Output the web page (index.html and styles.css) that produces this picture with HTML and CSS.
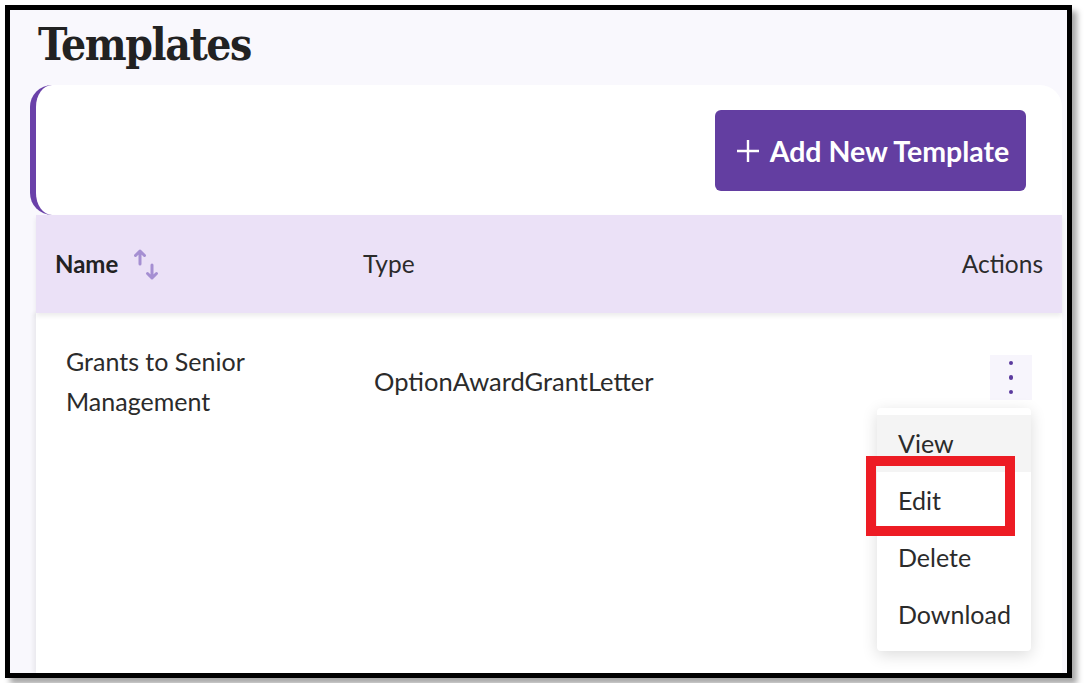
FILE: index.html
```html
<!DOCTYPE html>
<html>
<head>
<meta charset="utf-8">
<link rel="stylesheet" href="styles.css">
</head>
<body>
<div class="frame">
  <div class="page-head">
    <h1 class="title">Templates</h1>
  </div>
  <div class="card">
    <div class="card-top">
      <button class="add-btn">
        <svg class="plus" width="24" height="24" viewBox="0 0 24 24"><path d="M12 1v22M1 12h22" stroke="#fff" stroke-width="2.4" fill="none"/></svg>
        <span>Add New Template</span>
      </button>
    </div>
    <div class="thead">
      <div class="th th-name">Name
        <svg class="sort" width="26" height="32" viewBox="0 0 26 32"><g stroke="#a58fd2" stroke-width="3" fill="none" stroke-linecap="round" stroke-linejoin="round"><path d="M6 15V2M1.5 6.5L6 2l4.5 4.5"/><path d="M18 16v13M13.5 24.5L18 29l4.5-4.5"/></g></svg>
      </div>
      <div class="th">Type</div>
      <div class="th th-actions">Actions</div>
    </div>
    <div class="tbody">
      <div class="row">
        <div class="cell cell-name"><span class="name-text">Grants to Senior Management</span></div>
        <div class="cell cell-type">OptionAwardGrantLetter</div>
        <div class="cell cell-actions">
          <div class="kebab-wrap">
            <div class="kebab"><i></i><i></i><i></i></div>
            <div class="menu">
              <div class="menu-item hover">View</div>
              <div class="menu-item">Edit</div>
              <div class="menu-item">Delete</div>
              <div class="menu-item">Download</div>
              <div class="highlight"></div>
            </div>
          </div>
        </div>
      </div>
    </div>
  </div>
</div>
</body>
</html>
```

FILE: styles.css
```css
* { box-sizing: border-box; }
html, body { margin: 0; padding: 0; background: #fff; }
body { font-family: Lato, "Open Sans", sans-serif; color: #2b2b2b; }

.frame {
  margin: 5px;
  width: 1067px;
  height: 673px;
  border: 5px solid #000;
  background: #f9f8fd;
  box-shadow: 5px 6px 6px rgba(0,0,0,0.35);
  overflow: hidden;
  display: flex;
  flex-direction: column;
}

.page-head {
  height: 75px;
  padding: 7px 0 0 28px;
  flex: none;
}
.title {
  margin: 0;
  font-family: "DejaVu Serif", "Liberation Serif", serif;
  font-stretch: condensed;
  font-weight: 700;
  font-size: 44px;
  line-height: 56px;
  color: #222;
  letter-spacing: -1.4px;
}

.card {
  margin: 0 5px 0 20px;
  flex: 1;
  display: flex;
  flex-direction: column;
}
.card-top {
  height: 130px;
  flex: none;
  background: #fff;
  border-left: 6px solid #6a41a9;
  border-radius: 22px 22px 0 22px;
  display: flex;
  justify-content: flex-end;
  align-items: flex-start;
  padding: 25px 36px 0 0;
}
.add-btn {
  width: 311px;
  height: 81px;
  background: #633ea1;
  border: none;
  border-radius: 6px;
  color: #fff;
  font-family: Lato, sans-serif;
  font-weight: 700;
  font-size: 28.5px;
  letter-spacing: 0;
  display: flex;
  align-items: center;
  justify-content: center;
  gap: 10px;
  padding: 0 0 0 4px;
}
.plus { flex: none; }

.thead {
  margin-left: 6px;
  height: 98px;
  flex: none;
  background: #ebe1f7;
  display: grid;
  grid-template-columns: 308px 1fr auto;
  align-items: center;
  padding: 0 19px;
  position: relative;
  z-index: 1;
  box-shadow: 0 3px 5px rgba(0,0,0,0.08);
}
.th { font-size: 24.5px; line-height: 30px; color: #2b2b2b; }
.th-name { font-weight: 700; font-size: 24px; display: flex; align-items: center; color: #222; }
.sort { margin-left: 16px; margin-top: 2px; }

.tbody {
  margin-left: 6px;
  flex: 1;
  background: #fff;
  box-shadow: -3px 0 4px rgba(0,0,0,0.06);
}
.row {
  display: grid;
  grid-template-columns: 308px 1fr auto;
  align-items: center;
  padding: 28px 30px 0 30px;
}
.cell { font-size: 25px; line-height: 40px; color: #2b2b2b; }
.cell-type { font-size: 25.5px; }
.name-text { display: block; max-width: 220px; }
.cell-actions { align-self: start; margin-top: 14px; }

.kebab-wrap { position: relative; }
.kebab {
  width: 42px;
  height: 45px;
  background: #f7f5fc;
  display: flex;
  flex-direction: column;
  align-items: center;
  justify-content: center;
  gap: 10px;
}
.kebab i {
  display: block;
  width: 4.5px;
  height: 4.5px;
  border-radius: 50%;
  background: #5b3a9e;
}

.menu {
  position: absolute;
  top: 53px;
  right: 1px;
  width: 154px;
  background: #fff;
  border-radius: 4px;
  box-shadow: 0 4px 16px rgba(0,0,0,0.14);
  padding: 7px 0 8px;
  z-index: 5;
}
.menu-item {
  height: 57px;
  line-height: 57px;
  padding-left: 21px;
  font-size: 25px;
  color: #2b2b2b;
}
.menu-item.hover { background: #f4f4f4; }
.highlight {
  position: absolute;
  left: -11px;
  top: 48px;
  width: 149px;
  height: 80px;
  border: 10px solid #ed1c24;
}
```
